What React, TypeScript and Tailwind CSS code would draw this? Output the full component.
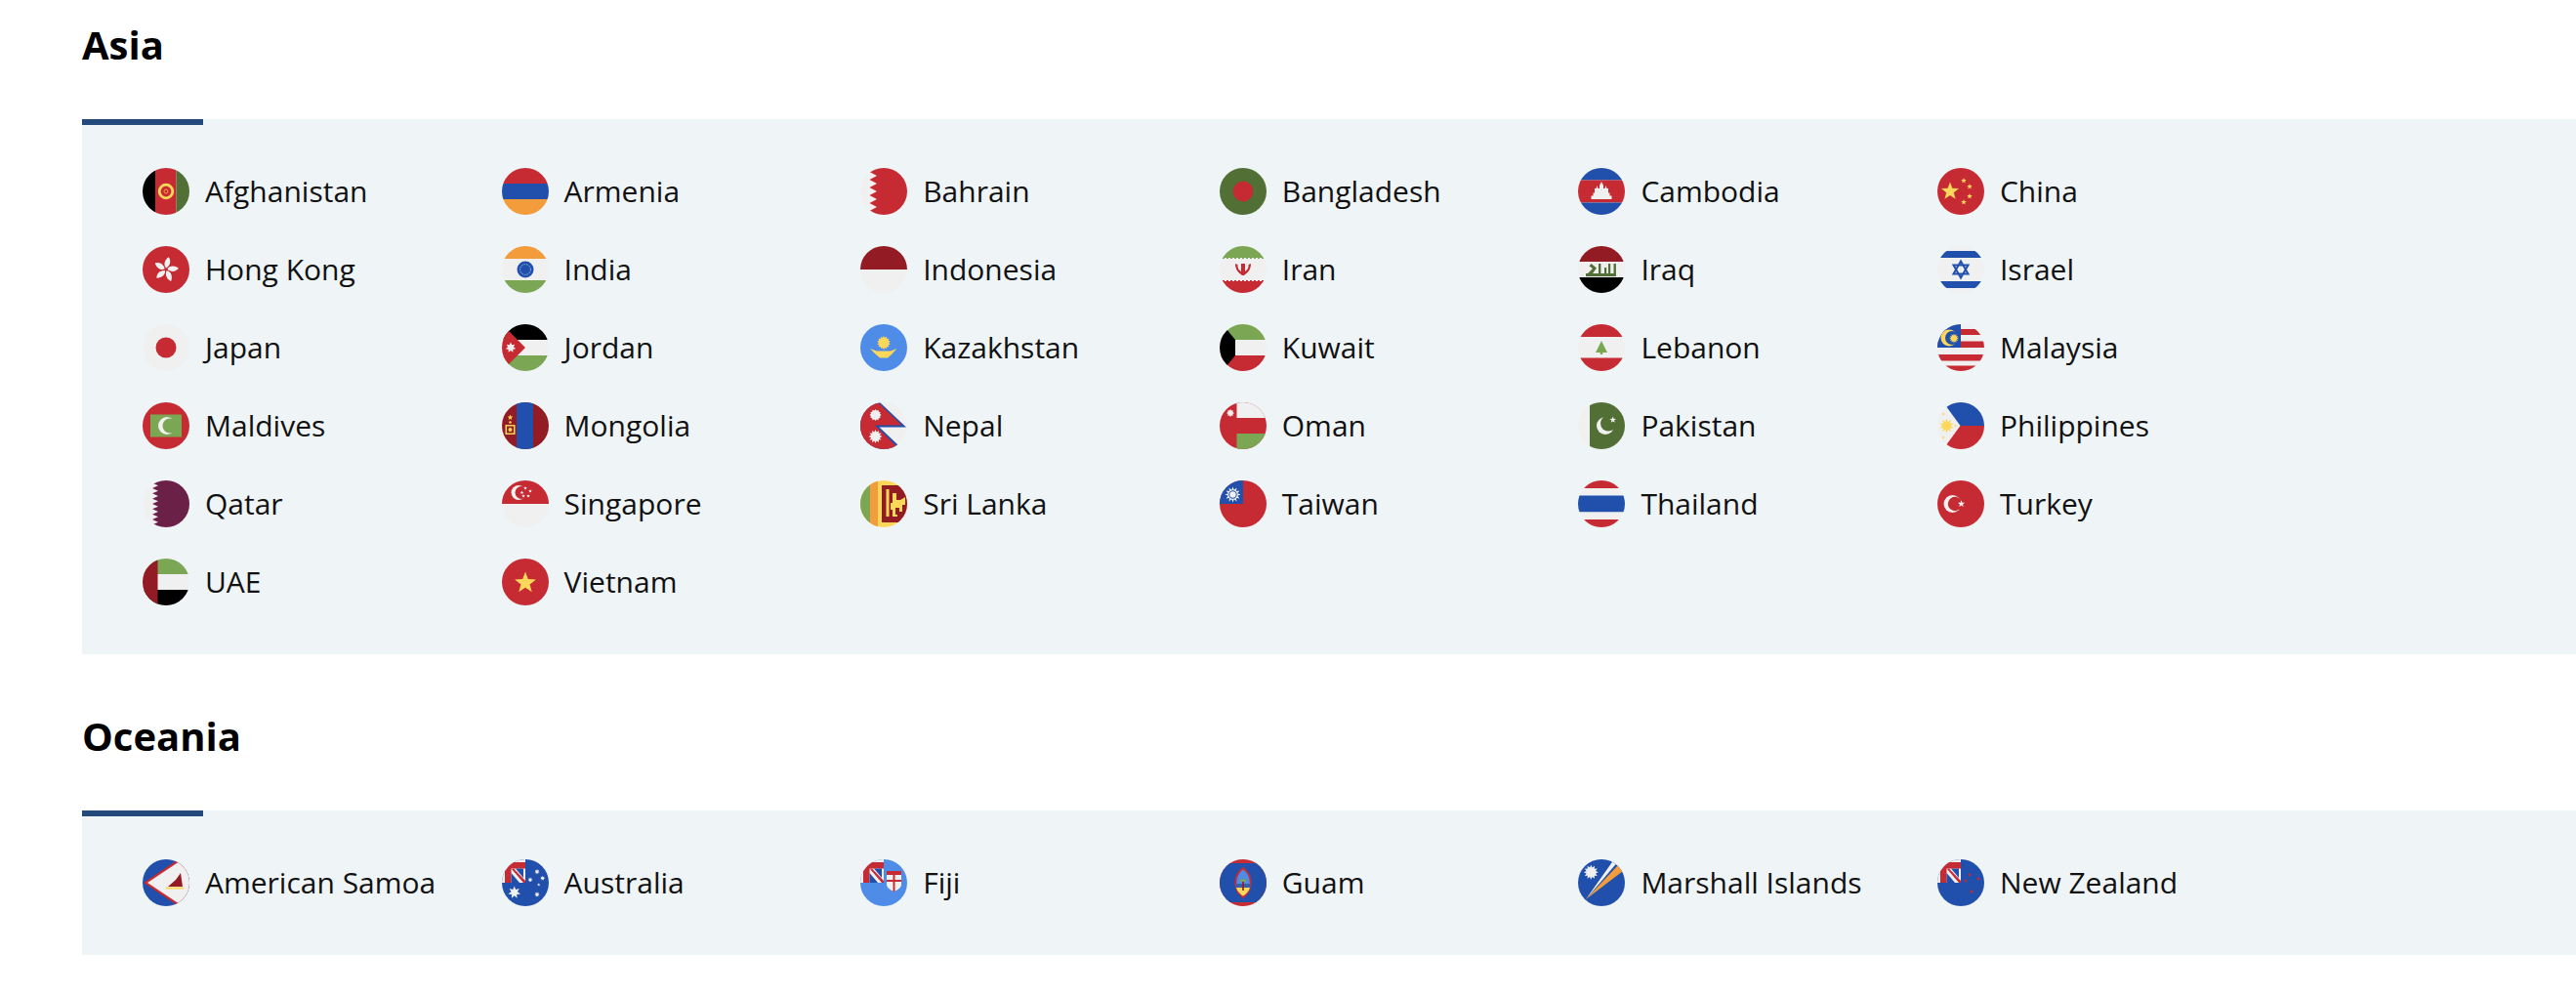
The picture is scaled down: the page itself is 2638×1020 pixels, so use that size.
import React from 'react';

const RED = '#c62a32';
const BLUE = '#2150ac';
const GREEN = '#7ba654';
const DGREEN = '#526f35';
const DRED = '#931b23';
const WHITE = '#f0f0f0';
const YELLOW = '#fbd75a';
const ORANGE = '#f39c3c';
const LBLUE = '#4f8ce8';
const BLACK = '#000000';

// polygon points for stars and little suns
const starPts = (cx: number, cy: number, r: number, n = 5, inner = 0.42, rot = -90) => {
  const pts: string[] = [];
  for (let i = 0; i < n * 2; i++) {
    const a = ((rot + (i * 180) / n) * Math.PI) / 180;
    const rr = i % 2 === 0 ? r : r * inner;
    pts.push(`${(cx + rr * Math.cos(a)).toFixed(2)},${(cy + rr * Math.sin(a)).toFixed(2)}`);
  }
  return pts.join(' ');
};

const Star = ({ x, y, r, fill, n = 5, inner = 0.42, rot = -90 }: { x: number; y: number; r: number; fill: string; n?: number; inner?: number; rot?: number }) => (
  <polygon points={starPts(x, y, r, n, inner, rot)} fill={fill} />
);

const Rect = ({ x = 0, y = 0, w = 48, h = 48, fill }: { x?: number; y?: number; w?: number; h?: number; fill: string }) => (
  <rect x={x} y={y} width={w} height={h} fill={fill} />
);

const Bands = ({ colors, stops }: { colors: string[]; stops: number[] }) => (
  <>
    {colors.map((c, i) => (
      <Rect key={i} y={i === 0 ? 0 : stops[i - 1]} h={(i === colors.length - 1 ? 48 : stops[i]) - (i === 0 ? 0 : stops[i - 1])} fill={c} />
    ))}
  </>
);

// outer disc with a second disc in the ground colour on top
const Crescent = ({ x, y, r, x2, y2 = y, r2, fill, ground }: { x: number; y: number; r: number; x2: number; y2?: number; r2: number; fill: string; ground: string }) => (
  <>
    <circle cx={x} cy={y} r={r} fill={fill} />
    <circle cx={x2} cy={y2} r={r2} fill={ground} />
  </>
);

// serrated edge of the Gulf flags
const saw = (x1: number, x2: number, steps: number) => {
  let d = `M48 0H${x2}`;
  const h = 48 / steps;
  for (let i = 0; i < steps; i++) {
    d += `L${x1} ${(i + 0.5) * h}L${x2} ${(i + 1) * h}`;
  }
  return d + 'H48Z';
};

// Union Jack corner shared by Australia, Fiji and New Zealand
const Canton = ({ ground }: { ground: string }) => (
  <>
    <Rect fill={ground} />
    <Rect w={24} h={24} fill={WHITE} />
    <path d="M3 24V12L10 3H24V9.5H9.5V24Z" fill={RED} />
    <path d="M14 9.5H22V19Z" fill={BLUE} />
    <path d="M9.5 14L18 24H9.5Z" fill={BLUE} />
    <path d="M10 10L12 9.5L24 22V24H22Z" fill={RED} />
  </>
);

const flags: Record<string, React.ReactNode> = {
  Afghanistan: (
    <>
      <Rect w={13} fill={BLACK} />
      <Rect x={13} w={21.5} fill={RED} />
      <Rect x={34.5} w={13.5} fill={DGREEN} />
      <circle cx={24} cy={24} r={6.8} fill="none" stroke={YELLOW} strokeWidth={2.8} />
      <circle cx={24} cy={24} r={2} fill="none" stroke={ORANGE} strokeWidth={1} />
    </>
  ),
  Armenia: <Bands colors={[RED, BLUE, ORANGE]} stops={[16, 32]} />,
  Bahrain: (
    <>
      <Rect fill={WHITE} />
      <path d={saw(9.5, 17, 6)} fill={RED} />
    </>
  ),
  Bangladesh: (
    <>
      <Rect fill={DGREEN} />
      <circle cx={24} cy={24} r={10.4} fill={RED} />
    </>
  ),
  Cambodia: (
    <>
      <Bands colors={[BLUE, RED, BLUE]} stops={[12.5, 35.5]} />
      <path d="M13.5 32V28.5H15.5V25.5H17V21H18.5L19.5 18L20.5 21H22V18L24 14L26 18V21H27.5L28.5 18L29.5 21H31V25.5H32.5V28.5H34.5V32Z" fill={WHITE} />
    </>
  ),
  China: (
    <>
      <Rect fill={RED} />
      <Star x={13} y={24} r={9.5} fill={YELLOW} />
      <Star x={27} y={13} r={3} fill={YELLOW} />
      <Star x={33} y={19} r={3} fill={YELLOW} />
      <Star x={33} y={29} r={3} fill={YELLOW} />
      <Star x={27} y={35} r={3} fill={YELLOW} />
    </>
  ),
  'Hong Kong': (
    <>
      <Rect fill={RED} />
      {[10, 82, 154, 226, 298].map((a) => (
        <path key={a} transform={`rotate(${a} 24 24)`} d="M24 22.5C20.5 20.5 20.5 15 24.5 11C27.5 14 28 19 24 22.5Z" fill={WHITE} />
      ))}
    </>
  ),
  India: (
    <>
      <Bands colors={[ORANGE, WHITE, GREEN]} stops={[13, 35]} />
      <circle cx={24} cy={24} r={8.5} fill={BLUE} />
      <circle cx={24} cy={24} r={5.4} fill="none" stroke="#a9c1ea" strokeWidth={1} strokeDasharray="1.4 1.2" />
    </>
  ),
  Indonesia: <Bands colors={[DRED, WHITE]} stops={[24]} />,
  Iran: (
    <>
      <Bands colors={[GREEN, WHITE, RED]} stops={[13, 35]} />
      <path d="M5 13H43" stroke={WHITE} strokeWidth={2} strokeDasharray="2 2" />
      <path d="M5 35H43" stroke={WHITE} strokeWidth={2} strokeDasharray="2 2" />
      <path d="M16 18C16 24 19 27 23 30H25C29 27 32 24 32 18L29.5 19C30 22 28 25 26 26V18H22V26C20 25 18 22 18.5 19Z" fill={RED} />
    </>
  ),
  Iraq: (
    <>
      <Bands colors={[DRED, WHITE, BLACK]} stops={[16, 32]} />
      <Rect x={8} y={28} w={31} h={3} fill={DGREEN} />
      <path d="M10 28L15 23L11.5 20.5L13.5 18L19 22.5L15 28Z" fill={DGREEN} />
      <Rect x={21} y={18} w={2.4} h={10} fill={DGREEN} />
      <Rect x={27} y={22} w={2.2} h={6} fill={DGREEN} />
      <Rect x={31} y={18} w={2.2} h={10} fill={DGREEN} />
      <Rect x={36.5} y={18} w={2.4} h={10} fill={DGREEN} />
    </>
  ),
  Israel: (
    <>
      <Rect fill={WHITE} />
      <Rect y={5} h={7} fill={BLUE} />
      <Rect y={36} h={7} fill={BLUE} />
      <path d="M24 15.5L31.5 28.5H16.5Z M24 32.5L16.5 19.5H31.5Z" fill="none" stroke={BLUE} strokeWidth={2} />
    </>
  ),
  Japan: (
    <>
      <Rect fill={WHITE} />
      <circle cx={24} cy={24} r={10.5} fill={RED} />
    </>
  ),
  Jordan: (
    <>
      <Bands colors={[BLACK, WHITE, GREEN]} stops={[16, 32]} />
      <path d="M0 0L24 24L0 48Z" fill={RED} />
      <Star x={9} y={24} r={5.4} n={7} inner={0.55} fill={WHITE} />
    </>
  ),
  Kazakhstan: (
    <>
      <Rect fill={LBLUE} />
      <Star x={24} y={19} r={7} n={14} inner={0.72} fill={YELLOW} />
      <path d="M10 25L17 27.5H31L37.5 25L32 31L28 34.5H20L16 31Z" fill={YELLOW} />
    </>
  ),
  Kuwait: (
    <>
      <Bands colors={[GREEN, WHITE, RED]} stops={[16, 32]} />
      <path d="M0 0H3L16 16V32L3 48H0Z" fill={BLACK} />
    </>
  ),
  Lebanon: (
    <>
      <Bands colors={[RED, WHITE, RED]} stops={[13, 34.5]} />
      <path d="M24 17L30 29H25.2V31H22.8V29H18Z" fill={GREEN} />
    </>
  ),
  Malaysia: (
    <>
      <Rect fill={WHITE} />
      <Rect y={5} h={6} fill={RED} />
      <Rect y={17.5} h={6.5} fill={RED} />
      <Rect y={31} h={6.5} fill={RED} />
      <Rect y={42.5} h={5.5} fill={RED} />
      <Rect w={24} h={24} fill={BLUE} />
      <Crescent x={12} y={14} r={8.5} x2={15} r2={7} fill={YELLOW} ground={BLUE} />
      <Star x={17} y={14.5} r={5} n={12} inner={0.6} fill={YELLOW} />
    </>
  ),
  Maldives: (
    <>
      <Rect fill={RED} />
      <Rect x={8} y={12.5} w={32} h={23} fill={GREEN} />
      <Crescent x={25} y={24} r={9} x2={28} r2={7.5} fill={WHITE} ground={GREEN} />
    </>
  ),
  Mongolia: (
    <>
      <Rect fill={DRED} />
      <Rect x={15} w={17} fill={BLUE} />
      <Star x={8.5} y={15.5} r={3} fill={YELLOW} />
      <circle cx={8.5} cy={20.5} r={1.3} fill={YELLOW} />
      <path d="M3.5 23H13.5V33H3.5Z M5 24.5V31.5H12V24.5Z" fillRule="evenodd" fill={YELLOW} />
      <circle cx={8.5} cy={28} r={2} fill={YELLOW} />
    </>
  ),
  Nepal: (
    <>
      <Rect fill={WHITE} />
      <path d="M0 0H20L47 25.5H19.5L39 44L34 48H0Z" fill={BLUE} />
      <path d="M0 0H18L42.5 23.5H15L36.5 44.5L32 48H0Z" fill={RED} />
      <Star x={15.5} y={13} r={6} n={12} inner={0.78} fill={WHITE} />
      <Star x={15.5} y={35} r={7} n={12} inner={0.65} fill={WHITE} />
    </>
  ),
  Oman: (
    <>
      <Rect fill={RED} />
      <Rect x={17.5} w={30.5} h={16} fill={WHITE} />
      <Rect x={17.5} y={32} w={30.5} h={16} fill={GREEN} />
      <Star x={11} y={11} r={4} n={8} inner={0.65} fill={WHITE} />
    </>
  ),
  Pakistan: (
    <>
      <Rect fill={WHITE} />
      <Rect x={12} w={36} fill={DGREEN} />
      <Crescent x={28} y={24} r={9} x2={31} y2={21.5} r2={8} fill={WHITE} ground={DGREEN} />
      <Star x={35.7} y={18} r={3.4} fill={WHITE} />
    </>
  ),
  Philippines: (
    <>
      <Rect fill={WHITE} />
      <path d="M6 0H48V24H23.5Z" fill={BLUE} />
      <path d="M6 48H48V24H23.5Z" fill={RED} />
      <Star x={9.5} y={24} r={7.5} n={10} inner={0.55} fill={YELLOW} />
      <Star x={18.5} y={24} r={1.8} fill={YELLOW} />
      <Star x={6} y={12} r={1.8} fill={YELLOW} />
      <Star x={6} y={36} r={1.8} fill={YELLOW} />
    </>
  ),
  Qatar: (
    <>
      <Rect fill={WHITE} />
      <path d={saw(10, 16, 9)} fill="#6b2147" />
    </>
  ),
  Singapore: (
    <>
      <Bands colors={[RED, WHITE]} stops={[24]} />
      <Crescent x={17} y={12.5} r={7.5} x2={20} r2={6.5} fill={WHITE} ground={RED} />
      <Star x={24} y={8} r={2} fill={WHITE} />
      <Star x={29} y={11} r={2} fill={WHITE} />
      <Star x={20.5} y={12.5} r={2} fill={WHITE} />
      <Star x={22} y={16} r={2} fill={WHITE} />
      <Star x={27} y={16} r={2} fill={WHITE} />
    </>
  ),
  'Sri Lanka': (
    <>
      <Rect fill={YELLOW} />
      <Rect w={10} fill={GREEN} />
      <Rect x={10} w={8} fill={ORANGE} />
      <Rect x={22} y={5} w={26} h={38} fill={DRED} />
      <Rect x={26.5} y={9} w={3} h={28} fill={YELLOW} />
      <path d="M33 13H37V20H41L46 17V25H43V32H40V28H36V35H38V37H33V30H31V23H33Z" fill={YELLOW} />
    </>
  ),
  Taiwan: (
    <>
      <Rect fill={RED} />
      <Rect w={24} h={24} fill={BLUE} />
      <Star x={13.5} y={14.5} r={8} n={12} inner={0.6} fill={WHITE} />
      <circle cx={13.5} cy={14.5} r={4.2} fill={BLUE} />
      <circle cx={13.5} cy={14.5} r={3.2} fill={WHITE} />
    </>
  ),
  Thailand: <Bands colors={[RED, WHITE, BLUE, WHITE, RED]} stops={[8, 15.5, 32.5, 40]} />,
  Turkey: (
    <>
      <Rect fill={RED} />
      <Crescent x={15.5} y={24} r={9} x2={18} r2={7.2} fill={WHITE} ground={RED} />
      <Star x={24.5} y={24} r={3.8} fill={WHITE} />
    </>
  ),
  UAE: (
    <>
      <Bands colors={[GREEN, WHITE, BLACK]} stops={[16, 32]} />
      <Rect w={15.5} fill={DRED} />
    </>
  ),
  Vietnam: (
    <>
      <Rect fill={RED} />
      <Star x={24} y={25} r={11.5} fill={YELLOW} />
    </>
  ),
  'American Samoa': (
    <>
      <Rect fill={BLUE} />
      <path d="M37 0H48V48H37L1 24Z" fill={RED} />
      <path d="M41 0H48V48H41L5 24Z" fill={WHITE} />
      <path d="M39 14L34 21L26 28H41Z" fill={DRED} />
      <Rect x={24} y={28.5} w={18} h={2} fill={YELLOW} />
    </>
  ),
  Australia: (
    <>
      <Canton ground={BLUE} />
      <Star x={12.7} y={34} r={6.5} n={7} inner={0.5} fill={WHITE} />
      <Star x={36} y={12.7} r={2.8} n={7} inner={0.5} fill={WHITE} />
      <Star x={29} y={21} r={2.6} n={7} inner={0.5} fill={WHITE} />
      <Star x={41.7} y={19.3} r={2.6} n={7} inner={0.5} fill={WHITE} />
      <Star x={37.7} y={26} r={1.8} n={5} fill={WHITE} />
      <Star x={36} y={36} r={2.8} n={7} inner={0.5} fill={WHITE} />
    </>
  ),
  Fiji: (
    <>
      <Canton ground={LBLUE} />
      <path d="M27 12H42V26C42 29 38 31.5 34.5 33C31 31.5 27 29 27 26Z" fill={WHITE} />
      <Rect x={27} y={12} w={15} h={4} fill={RED} />
      <Rect x={33.5} y={12} w={2} h={21} fill={RED} />
      <Rect x={27} y={21} w={15} h={2} fill={RED} />
    </>
  ),
  Guam: (
    <>
      <Rect fill={RED} />
      <Rect y={4} h={40} fill={BLUE} />
      <path d="M24 8C35.5 16 35.5 32 24 40C12.5 32 12.5 16 24 8Z" fill={RED} />
      <path d="M24 10.5C33 17 33 31 24 37.5C15 31 15 17 24 10.5Z" fill={LBLUE} />
      <path d="M17 29H31C30 33 27 35.5 24 37.5C21 35.5 18 33 17 29Z" fill={YELLOW} />
      <Rect x={16.5} y={25} w={15} h={4} fill="#3a5fa8" />
      <Rect x={23.2} y={22} w={1.6} h={10} fill={DRED} />
      <Rect x={21} y={20.5} w={6} h={2.5} fill={GREEN} />
    </>
  ),
  'Marshall Islands': (
    <>
      <Rect fill={BLUE} />
      <path d="M8 41L37 0H43Z" fill={WHITE} />
      <path d="M8 41L41 6L46 12Z" fill={ORANGE} />
      <Star x={13.3} y={13.3} r={7.5} n={12} inner={0.65} fill={WHITE} />
    </>
  ),
  'New Zealand': (
    <>
      <Canton ground={BLUE} />
      <Star x={33} y={16} r={2.2} fill={RED} />
      <Star x={42} y={20} r={2.2} fill={RED} />
      <Star x={29} y={22} r={2.2} fill={RED} />
      <Star x={35} y={33} r={2.4} fill={RED} />
    </>
  ),
};

const Flag = ({ name }: { name: string }) => (
  <svg viewBox="0 0 48 48" className="w-12 h-12 shrink-0 rounded-full">
    {flags[name]}
  </svg>
);

const Region = ({ title, countries }: { title: string; countries: string[] }) => (
  <section>
    <h2 className="h-[122px] pt-[18px] pl-[84px] text-[40px] leading-[56px] font-bold text-black">{title}</h2>
    <div className="relative ml-[84px] bg-[#eff4f7] pl-[62px] pt-[50px] pb-[50px]">
      <div className="absolute left-0 top-0 w-[124px] h-1.5 bg-[#234a7b]" />
      <ul className="grid grid-cols-[repeat(6,367.6px)] gap-y-8">
        {countries.map((c) => (
          <li key={c} className="flex items-center gap-4 h-12 text-[30px] text-[#111111]">
            <Flag name={c} />
            <span className="-translate-y-px">{c}</span>
          </li>
        ))}
      </ul>
    </div>
  </section>
);

const asia = [
  'Afghanistan', 'Armenia', 'Bahrain', 'Bangladesh', 'Cambodia', 'China',
  'Hong Kong', 'India', 'Indonesia', 'Iran', 'Iraq', 'Israel',
  'Japan', 'Jordan', 'Kazakhstan', 'Kuwait', 'Lebanon', 'Malaysia',
  'Maldives', 'Mongolia', 'Nepal', 'Oman', 'Pakistan', 'Philippines',
  'Qatar', 'Singapore', 'Sri Lanka', 'Taiwan', 'Thailand', 'Turkey',
  'UAE', 'Vietnam',
];

const oceania = ['American Samoa', 'Australia', 'Fiji', 'Guam', 'Marshall Islands', 'New Zealand'];

const App: React.FC = () => {
  return (
    <div className="bg-white h-[1020px] overflow-hidden font-['Open_Sans',sans-serif]">
      <Region title="Asia" countries={asia} />
      <div className="h-[38px]" />
      <Region title="Oceania" countries={oceania} />
    </div>
  );
};

export default App;
